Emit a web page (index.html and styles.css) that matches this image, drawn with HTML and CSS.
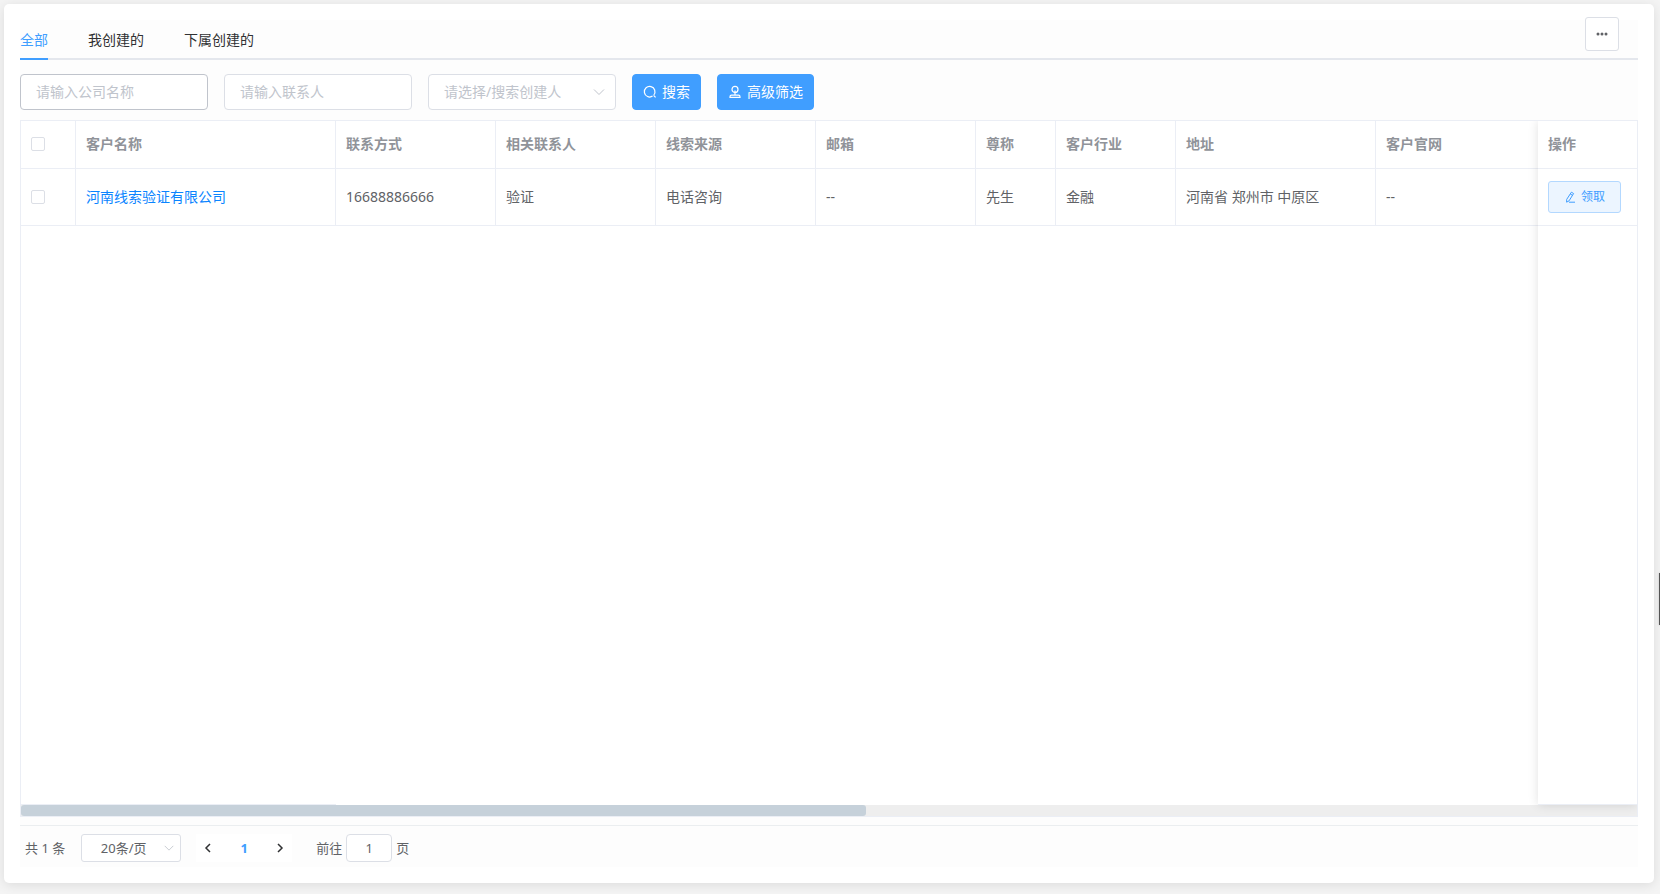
FILE: index.html
```html
<!DOCTYPE html>
<html lang="zh-CN">
<head>
  <meta charset="utf-8">
  <title>线索公海</title>
  <link rel="stylesheet" href="styles.css">
</head>
<body>
  <main class="card">
    <div class="content">
      <nav class="tabs">
        <a class="tab active" href="#all">全部</a>
        <a class="tab" href="#mine">我创建的</a>
        <a class="tab" href="#sub">下属创建的</a>
        <button class="more" type="button" aria-label="更多">
          <svg width="14" height="14" viewBox="0 0 14 14"><circle cx="3" cy="7" r="1.5"/><circle cx="7" cy="7" r="1.5"/><circle cx="11" cy="7" r="1.5"/></svg>
        </button>
      </nav>

      <form class="filters">
        <input class="field focus" type="text" placeholder="请输入公司名称" aria-label="公司名称">
        <input class="field" type="text" placeholder="请输入联系人" aria-label="联系人">
        <div class="select">
          <select class="field empty" aria-label="创建人">
            <option>请选择/搜索创建人</option>
          </select>
          <svg class="arrow" width="14" height="14" viewBox="0 0 14 14"><path d="M2 4.5l5 5 5-5"/></svg>
        </div>
        <button class="btn primary" type="button">
          <svg width="14" height="14" viewBox="0 0 14 14"><path d="M9.6 11.1a5.3 5.3 0 1 1 1.2-1.1M10.6 10.4l2 2"/></svg>
          <span>搜索</span>
        </button>
        <button class="btn primary" type="button">
          <svg width="14" height="14" viewBox="0 0 14 14"><circle cx="7" cy="4.4" r="3"/><path d="M7 5.4v4.4M2 12.4v-.7q0-1.5 1.5-1.5h7q1.5 0 1.5 1.5v.7z"/></svg>
          <span>高级筛选</span>
        </button>
      </form>

      <div class="table">
        <div class="table-main">
          <table class="grid">
            <colgroup>
              <col class="w55"><col class="w260"><col class="w160"><col class="w160"><col class="w160"><col class="w160"><col class="w80"><col class="w120"><col class="w200"><col class="w200">
            </colgroup>
            <thead>
              <tr>
                <th><input class="check" type="checkbox" aria-label="全选"></th>
                <th>客户名称</th>
                <th>联系方式</th>
                <th>相关联系人</th>
                <th>线索来源</th>
                <th>邮箱</th>
                <th>尊称</th>
                <th>客户行业</th>
                <th>地址</th>
                <th>客户官网</th>
              </tr>
            </thead>
            <tbody>
              <tr>
                <td><input class="check" type="checkbox" aria-label="选择"></td>
                <td><a class="name" href="#detail">河南线索验证有限公司</a></td>
                <td>16688886666</td>
                <td>验证</td>
                <td>电话咨询</td>
                <td>--</td>
                <td>先生</td>
                <td>金融</td>
                <td>河南省 郑州市 中原区</td>
                <td>--</td>
              </tr>
            </tbody>
          </table>
          <div class="fixed-line"></div>
        </div>
        <div class="scroll"><div class="thumb"></div></div>
        <div class="fixed-right">
          <table class="grid">
            <thead>
              <tr><th>操作</th></tr>
            </thead>
            <tbody>
              <tr>
                <td>
                  <button class="btn plain" type="button">
                    <svg width="12" height="12" viewBox="0 0 12 12"><path d="M7.4 1.2l2.2 1.3-4.5 7.3-2.5 1.4.1-2.8zM6.3 3l2.2 1.3M5 11.2h6"/></svg>
                    <span>领取</span>
                  </button>
                </td>
              </tr>
            </tbody>
          </table>
        </div>
      </div>

      <div class="pagination">
        <span class="total">共 1 条</span>
        <div class="select size">
          <select class="field" aria-label="每页条数">
            <option>20条/页</option>
          </select>
          <svg class="arrow" width="12" height="12" viewBox="0 0 14 14"><path d="M2 4.5l5 5 5-5"/></svg>
        </div>
        <div class="pager">
          <button type="button" aria-label="上一页"><svg width="12" height="12" viewBox="0 0 12 12"><path d="M8 2L4 6l4 4"/></svg></button>
          <button class="current" type="button">1</button>
          <button type="button" aria-label="下一页"><svg width="12" height="12" viewBox="0 0 12 12"><path d="M4 2l4 4-4 4"/></svg></button>
        </div>
        <label class="jump">前往<input class="field" type="text" value="1">页</label>
      </div>
    </div>
  </main>
  <div class="handle"></div>
</body>
</html>
```
FILE: styles.css
```css
* {
  box-sizing: border-box;
}
body {
  margin: 0;
  padding: 4px 6px 11px 4px;
  background-color: #f4f4f4;
  font-family: "Noto Sans", "Noto Sans CJK SC", sans-serif;
  font-size: 14px;
  line-height: 20px;
  color: #606266;
  overflow: hidden;
}
button,
input,
select {
  font: inherit;
  color: inherit;
  margin: 0;
}
button {
  cursor: pointer;
}
a {
  text-decoration: none;
}
svg {
  fill: none;
  stroke: currentColor;
  display: block;
  flex: none;
}
.card {
  display: flex;
  height: calc(100vh - 15px);
  padding: 16px;
  background-color: #fff;
  border-radius: 5px;
  box-shadow: 0 2px 12px rgba(0, 0, 0, 0.1);
}
.content {
  display: flex;
  flex-direction: column;
  flex: 1;
  min-width: 0;
  background-color: #fdfdfd;
}

/* tabs */
.tabs {
  position: relative;
  display: flex;
  gap: 40px;
  height: 40px;
  border-bottom: 2px solid #e4e7ed;
}
.tab {
  height: 40px;
  line-height: 40px;
  color: #303133;
}
.tab.active {
  color: #409eff;
  border-bottom: 2px solid #409eff;
}
.more {
  position: absolute;
  top: -3px;
  right: 19px;
  display: flex;
  align-items: center;
  justify-content: center;
  width: 34px;
  height: 34px;
  padding: 0;
  background-color: #fff;
  border: 1px solid #dcdfe6;
  border-radius: 3px;
}
.more svg {
  stroke: none;
  fill: #606266;
}

/* filters */
.filters {
  display: flex;
  gap: 16px;
  padding: 14px 0 10px;
}
.field {
  width: 188px;
  height: 36px;
  padding: 0 15px;
  background-color: #fff;
  border: 1px solid #dcdfe6;
  border-radius: 4px;
  outline: none;
  appearance: none;
}
input.field {
  padding-bottom: 2px;
}
.field.focus {
  border-color: #c0c4cc;
}
.field::placeholder,
.field.empty {
  color: #c0c4cc;
}
.select {
  position: relative;
}
.select .field {
  display: block;
}
.arrow {
  position: absolute;
  top: 11px;
  right: 10px;
  color: #c0c4cc;
  pointer-events: none;
}
.btn {
  display: flex;
  align-items: center;
  gap: 5px;
  border: 1px solid;
  white-space: nowrap;
}
.btn.primary {
  height: 36px;
  padding: 0 10px;
  color: #fff;
  background-color: #409eff;
  border-color: #409eff;
  border-radius: 4px;
}
.btn.primary svg {
  stroke-width: 1.2;
}
.btn.plain {
  height: 32px;
  padding: 0 15px;
  font-size: 12px;
  color: #409eff;
  background-color: #ecf5ff;
  border-color: #b3d8ff;
  border-radius: 3px;
}

/* table */
.table {
  position: relative;
  display: flex;
  flex-direction: column;
  flex: 1;
  min-height: 0;
  background-color: #fff;
  border: 1px solid #ebeef5;
  overflow: hidden;
}
.table-main {
  display: flex;
  flex-direction: column;
  justify-content: space-between;
  flex: 1;
  overflow: hidden;
}
.grid {
  table-layout: fixed;
  width: 100%;
  border-collapse: separate;
  border-spacing: 0;
}
.table-main .grid {
  width: 1555px;
  min-width: 100%;
}
.grid th,
.grid td {
  padding: 0 10px;
  text-align: left;
  border-right: 1px solid #ebeef5;
  border-bottom: 1px solid #ebeef5;
}
.grid th {
  height: 48px;
  padding-bottom: 2px;
  font-weight: bold;
  color: #909399;
}
.grid td {
  height: 57px;
}
.grid th:last-child,
.grid td:last-child {
  border-right: none;
}
.w55 { width: 55px; }
.w80 { width: 80px; }
.w120 { width: 120px; }
.w160 { width: 160px; }
.w200 { width: 200px; }
.w260 { width: 260px; }
.table-main .grid col:last-child {
  width: auto;
}
.name {
  color: #0a84ff;
}
.check {
  display: block;
  width: 14px;
  height: 14px;
  background-color: #fff;
  border: 1px solid #dcdfe6;
  border-radius: 2px;
  appearance: none;
}
.fixed-line {
  width: 315px;
  height: 1px;
  background-color: #ebeef5;
}
.fixed-right {
  position: absolute;
  top: 0;
  right: 0;
  bottom: 11px;
  width: 99px;
  background-color: #fff;
  border-bottom: 1px solid #ebeef5;
  box-shadow: 0 0 10px rgba(0, 0, 0, 0.12);
}
.scroll {
  height: 11px;
  background-color: #eee;
}
.thumb {
  width: 845px;
  height: 11px;
  background-color: #c6d1da;
  border-radius: 3px;
}

/* pagination */
.pagination {
  display: flex;
  align-items: center;
  height: 42px;
  margin-top: 8px;
  padding: 2px 5px 0;
  border-top: 1px solid #ebeef0;
  font-size: 13px;
}
.size {
  margin: 0 15px 0 16px;
}
.size .field {
  width: 100px;
  height: 28px;
  padding: 0 25px 0 10px;
  text-align: center;
  text-align-last: center;
  border-radius: 3px;
}
.size .arrow {
  top: 8px;
  right: 6px;
}
.pager {
  display: flex;
  background-color: #fff;
}
.pager button {
  display: flex;
  align-items: center;
  justify-content: center;
  width: 24px;
  height: 28px;
  padding: 0;
  color: #303133;
  background: none;
  border: none;
}
.pager svg {
  stroke-width: 1.5;
}
.pager .current {
  width: 48px;
  font-weight: bold;
  color: #409eff;
}
.jump {
  display: flex;
  align-items: center;
  gap: 4px;
  margin-left: 24px;
}
.jump .field {
  width: 46px;
  height: 28px;
  padding: 0 3px;
  text-align: center;
}

/* drawer handle on the window edge */
.handle {
  position: fixed;
  top: 573px;
  right: 0;
  width: 1px;
  height: 52px;
  background-color: #555;
  box-shadow: 0 0 2px rgba(0, 0, 0, 0.3);
}
```
